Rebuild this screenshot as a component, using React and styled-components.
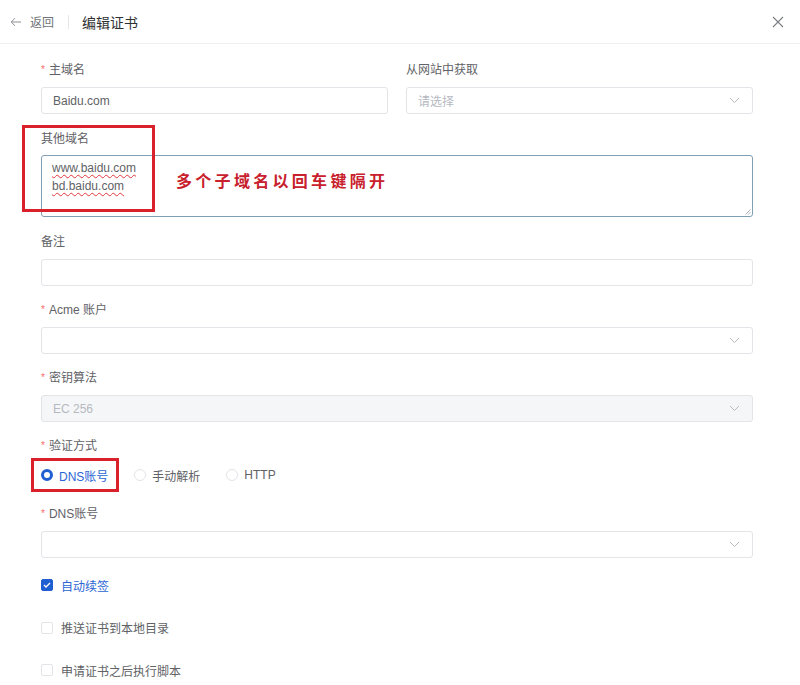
import React from 'react';
import styled, { createGlobalStyle } from 'styled-components';

const GlobalStyle = createGlobalStyle`
  html, body {
    margin: 0;
    padding: 0;
    background: #ffffff;
  }
  body {
    font-family: "Liberation Sans", "Noto Sans CJK SC", sans-serif;
    color: #606266;
  }
`;

const Page = styled.div`
  width: 800px;
  height: 685px;
  overflow: hidden;
  background: #fff;
`;

const Header = styled.div`
  display: flex;
  align-items: center;
  height: 43px;
  padding: 0 16px 0 10px;
  border-bottom: 1px solid #eef0f3;
`;

const Back = styled.div`
  display: flex;
  align-items: center;
  gap: 8px;
  font-size: 12px;
  color: #707378;
  cursor: pointer;
`;

const Divider = styled.span`
  width: 1px;
  height: 14px;
  background: #e4e6ea;
  margin: 0 13px 0 14px;
`;

const Title = styled.h1`
  margin: 0;
  font-size: 14px;
  font-weight: 400;
  color: #303133;
  flex: 1;
`;

const Close = styled.button`
  border: none;
  background: none;
  padding: 0;
  display: flex;
  color: #7a7d82;
  cursor: pointer;
`;

const Form = styled.div`
  padding: 17px 47px 0 41px;
`;

const Row = styled.div`
  display: grid;
  grid-template-columns: 347px 1fr;
  column-gap: 18px;
  margin-bottom: 1px;
`;

const Field = styled.div`
  position: relative;
  margin-bottom: ${p => p.$mb ?? 15}px;
`;

const Label = styled.div`
  height: 18px;
  line-height: 18px;
  font-size: 12px;
  color: #5f6266;
  margin-bottom: ${p => p.$mb ?? 8}px;
`;

const Star = styled.span`
  color: #f26d6d;
  font-size: 10px;
  margin-right: 4px;
  vertical-align: top;
`;

const Box = styled.div`
  display: flex;
  align-items: center;
  height: 27px;
  box-sizing: border-box;
  border: 1px solid #e2e4e8;
  border-radius: 3px;
  padding: 0 12px 0 11px;
  font-size: 12px;
  color: ${p => (p.$muted ? '#b6b9bf' : '#606266')};
  background: ${p => (p.$disabled ? '#f5f6f8' : '#fff')};
`;

const BoxText = styled.span`
  flex: 1;
`;

const TextArea = styled.div`
  position: relative;
  height: 62px;
  box-sizing: border-box;
  border: 1px solid #7f9fb4;
  border-radius: 3px;
  padding: 3px 10px;
  font-size: 12px;
  line-height: 18px;
  color: #5f6266;
`;

const Spell = styled.div`
  span {
    text-decoration: underline wavy #e0383e;
    text-decoration-thickness: 1px;
    text-underline-offset: 2px;
  }
`;

const Note = styled.span`
  position: absolute;
  left: 134px;
  top: 15px;
  font-family: "Noto Sans CJK SC", sans-serif;
  font-weight: 700;
  font-size: 16px;
  letter-spacing: 3.3px;
  color: #c8202c;
`;

const Grip = styled.svg`
  position: absolute;
  right: 1px;
  bottom: 1px;
`;

const Mark = styled.div`
  position: absolute;
  border: 3px solid #d9202b;
  pointer-events: none;
`;

const RadioRow = styled.div`
  display: flex;
  align-items: center;
  height: 28px;
  margin: 0 0 16px;
  position: relative;
`;

const RadioItem = styled.label`
  display: flex;
  align-items: center;
  gap: 6px;
  margin-right: 26px;
  font-size: 12px;
  color: ${p => (p.$on ? '#2a66d4' : '#606266')};
`;

const RadioDot = styled.span`
  width: 12px;
  height: 12px;
  box-sizing: border-box;
  border-radius: 50%;
  border: ${p => (p.$on ? '3.5px solid #1f5fd2' : '1px solid #e2e4e8')};
  background: #fff;
`;

const Checks = styled.div`
  display: flex;
  flex-direction: column;
  gap: 22.5px;
  margin-top: 17px;
`;

const CheckItem = styled.label`
  display: flex;
  align-items: center;
  gap: 8px;
  height: 20px;
  font-size: 12px;
  color: ${p => (p.$on ? '#2a66d4' : '#606266')};
`;

const CheckBox = styled.span`
  width: 12px;
  height: 12px;
  box-sizing: border-box;
  border-radius: 2px;
  display: flex;
  align-items: center;
  justify-content: center;
  border: 1px solid ${p => (p.$on ? '#1f5fd2' : '#e2e4e8')};
  background: ${p => (p.$on ? '#1f5fd2' : '#fff')};
`;

const Chevron = () => (
  <svg width="11" height="7" viewBox="0 0 11 7" fill="none">
    <path d="M1 1l4.5 4.5L10 1" stroke="#b8bbc0" strokeWidth="1" />
  </svg>
);

const Select = ({ value, muted, disabled }) => (
  <Box $muted={muted} $disabled={disabled}>
    <BoxText>{value}</BoxText>
    <Chevron />
  </Box>
);

const Req = ({ children, mb }) => (
  <Label $mb={mb}>
    <Star>*</Star>
    {children}
  </Label>
);

const App = () => {
  return (
    <Page>
      <GlobalStyle />
      <Header>
        <Back>
          <svg width="12" height="10" viewBox="0 0 12 10" fill="none">
            <path d="M11 5H1.5M5 1.2L1.2 5 5 8.8" stroke="#8a8d92" strokeWidth="1" />
          </svg>
          返回
        </Back>
        <Divider />
        <Title>编辑证书</Title>
        <Close>
          <svg width="12" height="12" viewBox="0 0 12 12" fill="none">
            <path d="M1 1l10 10M11 1L1 11" stroke="#7a7d82" strokeWidth="1.1" />
          </svg>
        </Close>
      </Header>

      <Form>
        <Row>
          <Field>
            <Req>主域名</Req>
            <Box>Baidu.com</Box>
          </Field>
          <Field>
            <Label>从网站中获取</Label>
            <Select value="请选择" muted />
          </Field>
        </Row>

        <Field $mb={16}>
          <Label $mb={7}>其他域名</Label>
          <TextArea>
            <Spell>
              <span>www.baidu.com</span>
              <br />
              <span>bd.baidu.com</span>
            </Spell>
            <Note>多个子域名以回车键隔开</Note>
            <Grip width="6" height="6" viewBox="0 0 6 6">
              <path d="M0.5 5.5L5.5 0.5M3 5.5L5.5 3" stroke="#9aa0a6" strokeWidth="0.8" />
            </Grip>
          </TextArea>
          <Mark style={{ left: -19, top: -5, width: 127, height: 81 }} />
        </Field>

        <Field>
          <Label>备注</Label>
          <Box />
        </Field>

        <Field>
          <Req>Acme 账户</Req>
          <Select value="" />
        </Field>

        <Field>
          <Req>密钥算法</Req>
          <Select value="EC 256" muted disabled />
        </Field>

        <Field $mb={0}>
          <Req mb={6}>验证方式</Req>
        </Field>
        <RadioRow>
          <RadioItem $on>
            <RadioDot $on />
            DNS账号
          </RadioItem>
          <RadioItem>
            <RadioDot />
            手动解析
          </RadioItem>
          <RadioItem>
            <RadioDot />
            HTTP
          </RadioItem>
          <Mark style={{ left: -10, top: -3, width: 82, height: 28 }} />
        </RadioRow>

        <Field>
          <Req>DNS账号</Req>
          <Select value="" />
        </Field>

        <Checks>
          <CheckItem $on>
            <CheckBox $on>
              <svg width="8" height="6" viewBox="0 0 8 6" fill="none">
                <path d="M1 3l2 2 4-4" stroke="#fff" strokeWidth="1.3" />
              </svg>
            </CheckBox>
            自动续签
          </CheckItem>
          <CheckItem>
            <CheckBox />
            推送证书到本地目录
          </CheckItem>
          <CheckItem>
            <CheckBox />
            申请证书之后执行脚本
          </CheckItem>
        </Checks>
      </Form>
    </Page>
  );
};

export default App;
